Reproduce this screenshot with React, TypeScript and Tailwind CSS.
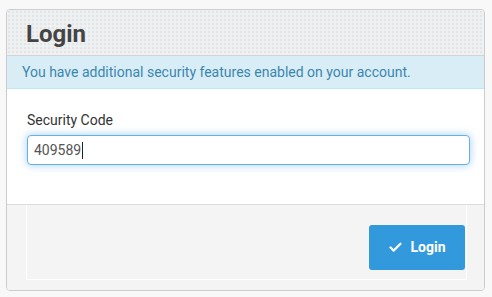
import { Check } from 'lucide-react';

export default function App() {
  return (
    <div className="min-h-[297px] w-[492px] bg-[#f8f8f8] pt-[9px] pl-[6px] font-['Roboto',sans-serif]">
      <div className="w-[479px] overflow-hidden rounded-[4px] border border-[#cccccc] bg-white">
        <div className="flex h-[46px] items-center border-b border-[#d4d4d4] bg-[#eef0f2] bg-[radial-gradient(#e2e5e8_1px,transparent_1px)] bg-[size:4px_4px] pl-[19px] pt-[2px]">
          <h1 className="text-[24px] font-bold leading-none text-[#444444]">Login</h1>
        </div>
        <div className="flex h-[33px] items-center border-b border-[#bce8f1] bg-[#d9edf7] pl-[15px] text-[14px] text-[#3a87ad]">
          You have additional security features enabled on your account.
        </div>
        <div className="h-[115px] pl-[20px] pr-[14px] pt-[22px]">
          <div className="text-[14px] leading-[18px] text-[#333333]">Security Code</div>
          <div className="mt-[6px] flex h-[30px] items-center rounded-[4px] border border-[#66afe9] bg-white pl-[6px] text-[14px] text-[#555555] shadow-[0_0_8px_rgba(102,175,233,0.6)]">
            409589
            <span className="ml-[1px] h-[17px] w-px bg-[#222222]" />
          </div>
        </div>
        <div className="h-[86px] border-t border-[#dddddd] bg-[#f4f4f4] pl-[19px] pr-[17px]">
          <div className="flex h-[75px] items-end justify-end border-b border-l border-r border-white pb-[9px] pr-[1px]">
            <button
              type="button"
              className="flex h-[45px] w-[96px] items-center justify-center gap-[7px] rounded-[3px] bg-[#3399dd] text-[14px] font-bold text-white"
            >
              <Check size={15} strokeWidth={3.5} />
              Login
            </button>
          </div>
        </div>
      </div>
    </div>
  );
}
